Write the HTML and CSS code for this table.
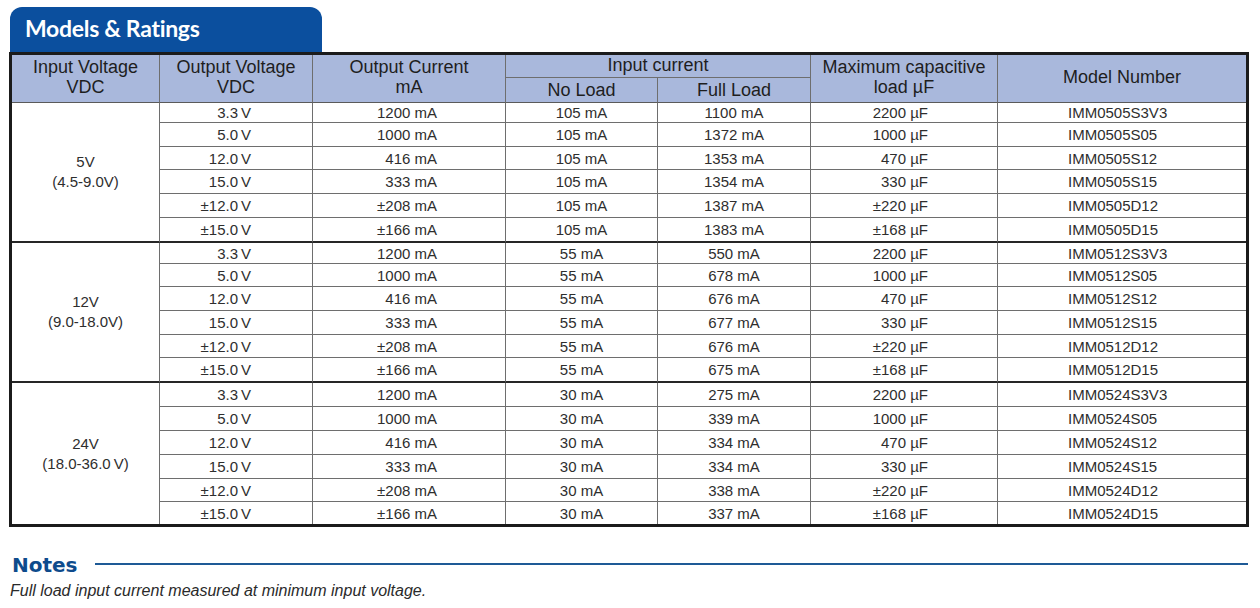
FILE: index.html
```html
<!DOCTYPE html>
<html lang="en">
<head>
<meta charset="utf-8">
<title>Models &amp; Ratings</title>
<link rel="stylesheet" href="styles.css">
</head>
<body>
<div class="page">
  <div class="tab"><h1 class="tab-title">Models &amp; Ratings</h1></div>
  <table class="ratings">
    <colgroup>
      <col class="c1"><col class="c2"><col class="c3"><col class="c4"><col class="c5"><col class="c6"><col class="c7">
    </colgroup>
    <thead>
      <tr class="h23">
        <th rowspan="2">Input Voltage<br>VDC</th>
        <th rowspan="2">Output Voltage<br>VDC</th>
        <th rowspan="2">Output Current<br>mA</th>
        <th colspan="2" class="group">Input current</th>
        <th rowspan="2">Maximum capacitive<br>load µF</th>
        <th rowspan="2" class="last">Model Number</th>
      </tr>
      <tr class="h25">
        <th>No Load</th>
        <th>Full Load</th>
      </tr>
    </thead>
    <tbody>
      <tr class="h20"><td rowspan="6" class="vin gend">5V<br>(4.5-9.0V)</td><td class="vout">3.3&#8201;V</td><td class="iout">1200 mA</td><td class="ctr">105 mA</td><td class="ctr">1100 mA</td><td class="cap">2200 µF</td><td class="model">IMM0505S3V3</td></tr>
      <tr class="h24"><td class="vout">5.0&#8201;V</td><td class="iout">1000 mA</td><td class="ctr">105 mA</td><td class="ctr">1372 mA</td><td class="cap">1000 µF</td><td class="model">IMM0505S05</td></tr>
      <tr class="h23"><td class="vout">12.0&#8201;V</td><td class="iout">416 mA</td><td class="ctr">105 mA</td><td class="ctr">1353 mA</td><td class="cap">470 µF</td><td class="model">IMM0505S12</td></tr>
      <tr class="h24"><td class="vout">15.0&#8201;V</td><td class="iout">333 mA</td><td class="ctr">105 mA</td><td class="ctr">1354 mA</td><td class="cap">330 µF</td><td class="model">IMM0505S15</td></tr>
      <tr class="h24"><td class="vout">±12.0&#8201;V</td><td class="iout">±208 mA</td><td class="ctr">105 mA</td><td class="ctr">1387 mA</td><td class="cap">±220 µF</td><td class="model">IMM0505D12</td></tr>
      <tr class="h25 gend"><td class="vout">±15.0&#8201;V</td><td class="iout">±166 mA</td><td class="ctr">105 mA</td><td class="ctr">1383 mA</td><td class="cap">±168 µF</td><td class="model">IMM0505D15</td></tr>

      <tr class="h21"><td rowspan="6" class="vin gend">12V<br>(9.0-18.0V)</td><td class="vout">3.3&#8201;V</td><td class="iout">1200 mA</td><td class="ctr">55 mA</td><td class="ctr">550 mA</td><td class="cap">2200 µF</td><td class="model">IMM0512S3V3</td></tr>
      <tr class="h23"><td class="vout">5.0&#8201;V</td><td class="iout">1000 mA</td><td class="ctr">55 mA</td><td class="ctr">678 mA</td><td class="cap">1000 µF</td><td class="model">IMM0512S05</td></tr>
      <tr class="h24"><td class="vout">12.0&#8201;V</td><td class="iout">416 mA</td><td class="ctr">55 mA</td><td class="ctr">676 mA</td><td class="cap">470 µF</td><td class="model">IMM0512S12</td></tr>
      <tr class="h24"><td class="vout">15.0&#8201;V</td><td class="iout">333 mA</td><td class="ctr">55 mA</td><td class="ctr">677 mA</td><td class="cap">330 µF</td><td class="model">IMM0512S15</td></tr>
      <tr class="h23"><td class="vout">±12.0&#8201;V</td><td class="iout">±208 mA</td><td class="ctr">55 mA</td><td class="ctr">676 mA</td><td class="cap">±220 µF</td><td class="model">IMM0512D12</td></tr>
      <tr class="h25 gend"><td class="vout">±15.0&#8201;V</td><td class="iout">±166 mA</td><td class="ctr">55 mA</td><td class="ctr">675 mA</td><td class="cap">±168 µF</td><td class="model">IMM0512D15</td></tr>

      <tr class="h24"><td rowspan="6" class="vin lastrow">24V<br>(18.0-36.0&#8201;V)</td><td class="vout">3.3&#8201;V</td><td class="iout">1200 mA</td><td class="ctr">30 mA</td><td class="ctr">275 mA</td><td class="cap">2200 µF</td><td class="model">IMM0524S3V3</td></tr>
      <tr class="h24"><td class="vout">5.0&#8201;V</td><td class="iout">1000 mA</td><td class="ctr">30 mA</td><td class="ctr">339 mA</td><td class="cap">1000 µF</td><td class="model">IMM0524S05</td></tr>
      <tr class="h24"><td class="vout">12.0&#8201;V</td><td class="iout">416 mA</td><td class="ctr">30 mA</td><td class="ctr">334 mA</td><td class="cap">470 µF</td><td class="model">IMM0524S12</td></tr>
      <tr class="h24"><td class="vout">15.0&#8201;V</td><td class="iout">333 mA</td><td class="ctr">30 mA</td><td class="ctr">334 mA</td><td class="cap">330 µF</td><td class="model">IMM0524S15</td></tr>
      <tr class="h23"><td class="vout">±12.0&#8201;V</td><td class="iout">±208 mA</td><td class="ctr">30 mA</td><td class="ctr">338 mA</td><td class="cap">±220 µF</td><td class="model">IMM0524D12</td></tr>
      <tr class="h22 lastrow"><td class="vout">±15.0&#8201;V</td><td class="iout">±166 mA</td><td class="ctr">30 mA</td><td class="ctr">337 mA</td><td class="cap">±168 µF</td><td class="model">IMM0524D15</td></tr>
    </tbody>
  </table>
  <div class="notes-head">
    <h2 class="notes-title">Notes</h2>
    <span class="notes-rule"></span>
  </div>
  <p class="note">Full load input current measured at minimum input voltage.</p>
</div>
</body>
</html>
```

FILE: styles.css
```css
html, body {
  margin: 0;
  padding: 0;
  background: #ffffff;
}

.page {
  padding: 7px 0 0 9px;
  font-family: "Liberation Sans", Arial, sans-serif;
  color: #333333;
}

.tab {
  width: 312px;
  height: 45px;
  margin-left: 1px;
  background: #0b4f9e;
  border-radius: 12px 12px 0 0;
  display: flex;
  align-items: center;
}

.tab-title {
  margin: 0 0 0 15px;
  font-family: Lato, "Liberation Sans", sans-serif;
  font-weight: 700;
  font-size: 23px;
  line-height: 1;
  color: #ffffff;
  letter-spacing: -0.3px;
  padding-bottom: 2px;
}

.ratings {
  width: 1240px;
  table-layout: fixed;
  border-collapse: separate;
  border-spacing: 0;
  border: 3px solid #1b1b1b;
}

.c1 { width: 148px; }
.c2 { width: 153px; }
.c3 { width: 193px; }
.c4 { width: 152px; }
.c5 { width: 153px; }
.c6 { width: 187px; }
.c7 { width: 248px; }

.ratings th,
.ratings td {
  padding: 0;
  border-right: 1px solid #6e6e6e;
  border-bottom: 1px solid #6e6e6e;
  vertical-align: middle;
  box-sizing: border-box;
}

.ratings th {
  background: #a9b8dc;
  font-weight: 400;
  font-size: 18px;
  line-height: 20px;
  color: #1e1e1e;
  text-align: center;
}

.ratings thead th[rowspan] {
  padding-bottom: 3px;
}

.ratings th.group {
  padding-bottom: 2px;
}

.ratings thead tr:last-child th,
.ratings thead th[rowspan] {
  border-bottom-color: #5a5a5a;
}

.ratings td {
  font-size: 15px;
  line-height: 17px;
  color: #2e2e2e;
  white-space: nowrap;
}

.ratings th.last,
.ratings td.model {
  border-right: none;
}

.h20 { height: 20px; }
.h21 { height: 21px; }
.h22 { height: 22px; }
.h23 { height: 23px; }
.h24 { height: 24px; }
.h25 { height: 25px; }

.ratings tr.gend td,
.ratings td.gend {
  border-bottom: 2px solid #262626;
}

.ratings tr.lastrow td,
.ratings td.lastrow {
  border-bottom: none;
}

.vin {
  text-align: center;
  line-height: 20px !important;
}

.vout {
  text-align: right;
  padding-right: 61px !important;
}

.iout {
  text-align: right;
  padding-right: 68px !important;
}

.ctr {
  text-align: center;
}

.cap {
  text-align: right;
  padding-right: 69px !important;
}

.model {
  text-align: left;
  padding-left: 70px !important;
}

.notes-head {
  display: flex;
  align-items: center;
  margin-top: 26px;
  padding-left: 3px;
  width: 1236px;
}

.notes-title {
  margin: 0;
  font-family: "DejaVu Sans", sans-serif;
  font-weight: 700;
  font-size: 20px;
  line-height: 24px;
  color: #0e4b8c;
}

.notes-rule {
  flex: 1;
  height: 2px;
  margin-left: 17px;
  margin-top: -2px;
  background: #1e5a96;
}

.note {
  margin: 4px 0 0 1px;
  font-style: italic;
  font-size: 16px;
  line-height: 20px;
  color: #2a2a2a;
}
```
